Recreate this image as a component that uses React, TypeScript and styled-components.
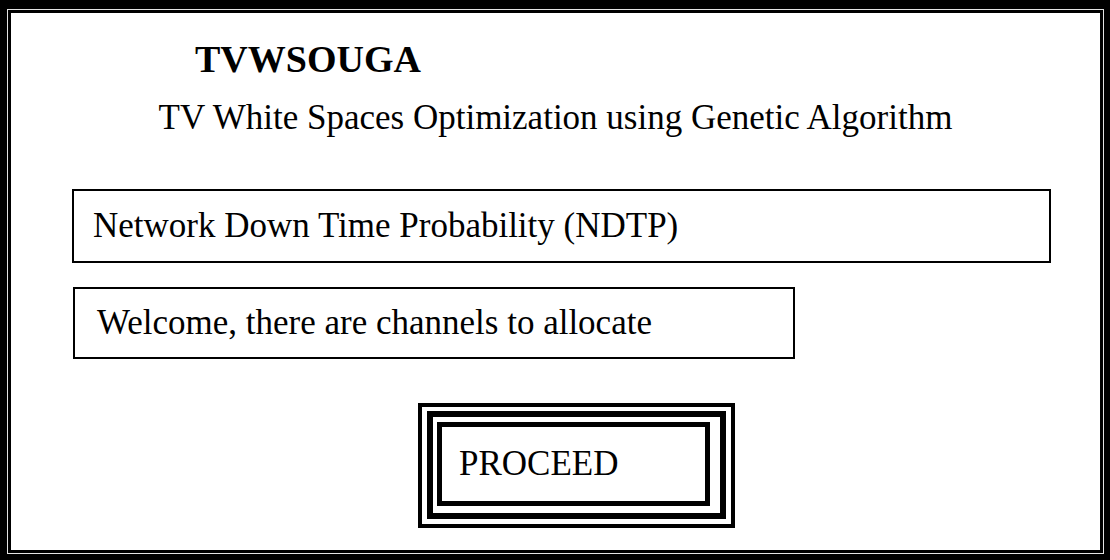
import React from "react"
import styled, {createGlobalStyle} from "styled-components"

const GlobalStyle = createGlobalStyle`
  html, body {
    margin: 0;
    padding: 0;
    background: #fff;
  }
  body {
    font-family: "Liberation Serif", "Times New Roman", serif;
    color: #000;
  }
`

const Frame = styled.div`
  box-sizing: border-box;
  width: 1110px;
  height: 560px;
  background: #000;
  padding: 9px 6px 6px 7px;
`

const Gap = styled.div`
  box-sizing: border-box;
  height: 100%;
  border: 1px solid #e4e4e4;
`

const Panel = styled.div`
  box-sizing: border-box;
  height: 100%;
  background: #fff;
  border: 3px solid #000;
  display: flex;
  flex-direction: column;
  align-items: flex-start;
`

const Title = styled.h1`
  margin: 26px 0 0 184px;
  font-size: 38px;
  font-weight: 700;
  line-height: 40px;
`

const Subtitle = styled.p`
  align-self: stretch;
  margin: 19px 0 0;
  text-align: center;
  font-size: 35px;
  line-height: 40px;
`

const FieldStack = styled.div`
  display: flex;
  flex-direction: column;
  gap: 24px;
  margin-top: 51px;
`

const Field = styled.div<{$width: number; $height: number; $offset: number; $inset: number}>`
  box-sizing: border-box;
  width: ${(p) => p.$width}px;
  height: ${(p) => p.$height}px;
  margin-left: ${(p) => p.$offset}px;
  border: 2px solid #000;
  display: flex;
  align-items: center;
  padding-left: ${(p) => p.$inset}px;
  font-size: 35px;
`

const ButtonOuter = styled.div`
  box-sizing: border-box;
  width: 317px;
  height: 125px;
  margin: 44px 0 0 407px;
  border: 4px solid #000;
  padding: 4px 5px 5px 5px;
`

const ButtonMiddle = styled.div`
  box-sizing: border-box;
  height: 100%;
  border: 6px solid #000;
  padding: 5px 10px 7px 4px;
`

const ButtonInner = styled.button`
  box-sizing: border-box;
  width: 100%;
  height: 100%;
  background: #fff;
  border: 5px solid #000;
  padding: 0 0 0 17px;
  text-align: left;
  font-family: "Liberation Serif", "Times New Roman", serif;
  font-size: 35px;
  color: #000;
  cursor: pointer;
`

export default function App() {
  return (
    <>
      <GlobalStyle />
      <Frame>
        <Gap>
          <Panel>
            <Title>TVWSOUGA</Title>
            <Subtitle>TV White Spaces Optimization using Genetic Algorithm</Subtitle>
            <FieldStack>
              <Field $width={979} $height={74} $offset={61} $inset={19}>
                Network Down Time Probability (NDTP)
              </Field>
              <Field $width={722} $height={72} $offset={62} $inset={22}>
                Welcome, there are channels to allocate
              </Field>
            </FieldStack>
            <ButtonOuter>
              <ButtonMiddle>
                <ButtonInner>PROCEED</ButtonInner>
              </ButtonMiddle>
            </ButtonOuter>
          </Panel>
        </Gap>
      </Frame>
    </>
  )
}
